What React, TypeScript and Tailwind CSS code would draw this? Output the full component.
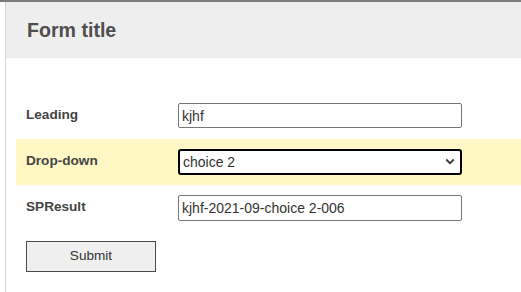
import React from "react";

export default function App() {
  const font = { fontFamily: '"Liberation Sans", Arial, sans-serif' };
  return (
    <div className="w-[521px] h-[292px] overflow-hidden bg-white" style={font}>
      <div className="border-t-2 border-[#7c7c7c] h-full">
        <div className="ml-[5px] border-l border-[#d6d6d6] h-full">
          <div className="h-[56px] bg-[#eeeeee] pl-[21px] pt-[17px]">
            <h1 className="text-[19.6px] leading-[22px] font-bold text-[#4e4e4e]">Form title</h1>
          </div>
          <div className="pt-[35px]">
            <div className="ml-[10px] pl-[10px] pt-[10px] pb-[11px] flex items-start">
              <label className="w-[152px] pt-[4px] text-[13.6px] leading-[15px] font-bold text-[#444444]">Leading</label>
              <input
                readOnly
                value="kjhf"
                className="w-[284px] h-[25px] border border-[#767676] rounded-[2px] px-[3px] text-[14px] text-[#333333] outline-none"
                style={font}
              />
            </div>
            <div className="ml-[10px] pl-[10px] py-[10px] flex items-start bg-[#fff8c5]">
              <label className="w-[152px] pt-[4px] text-[13.6px] leading-[15px] font-bold text-[#444444]">Drop-down</label>
              <div className="relative w-[284px] h-[26px]">
                <div className="w-full h-full border-2 border-black rounded-[3px] bg-white pl-[3px] flex items-center text-[14px] text-[#333333]">
                  choice 2
                </div>
                <svg
                  className="absolute right-[7px] top-[9px]"
                  width="10"
                  height="7"
                  viewBox="0 0 10 7"
                  fill="none"
                >
                  <path d="M1.2 1.5 L5 5.2 L8.8 1.5" stroke="#3a3a3a" strokeWidth="1.8" />
                </svg>
              </div>
            </div>
            <div className="ml-[10px] pl-[10px] py-[10px] flex items-start">
              <label className="w-[152px] pt-[4px] text-[13.6px] leading-[15px] font-bold text-[#444444]">SPResult</label>
              <input
                readOnly
                value="kjhf-2021-09-choice 2-006"
                className="w-[284px] h-[26px] border border-[#767676] rounded-[2px] px-[3px] text-[14px] text-[#333333] outline-none"
                style={font}
              />
            </div>
            <div className="ml-[10px] pl-[10px] pt-[10px]">
              <button
                className="w-[130px] h-[31px] bg-[#efefef] border border-[#4a4a4a] text-[13.6px] text-[#333333]"
                style={font}
              >
                Submit
              </button>
            </div>
          </div>
        </div>
      </div>
    </div>
  );
}
